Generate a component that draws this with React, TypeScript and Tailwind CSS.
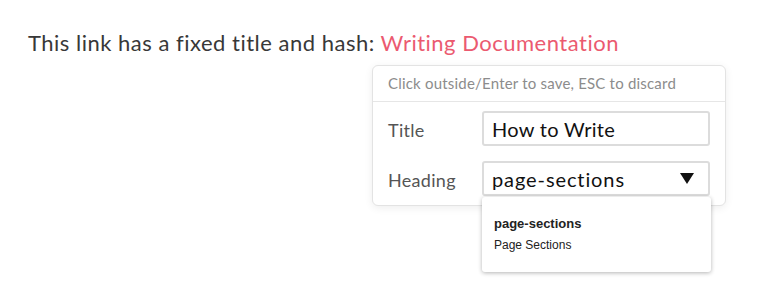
export default function App() {
  return (
    <div className="relative w-[760px] h-[303px] bg-white font-['Lato','Noto_Sans',sans-serif]">
      <p className="pt-[28px] pl-[28px] text-[22px] leading-[30px] tracking-[0.5px] text-[#383838]">
        This link has a fixed title and hash:{" "}
        <span className="text-[#eb5a70]">Writing Documentation</span>
      </p>

      <div className="absolute left-[372px] top-[65px] w-[354px] rounded-[6px] border border-[#e3e3e3] bg-white shadow-[0_2px_8px_rgba(0,0,0,0.07)]">
        <div className="h-[36px] border-b border-[#e6e6e6] pl-[15px] flex items-center text-[15px] tracking-[0.2px] text-[#8c8c8c]">
          Click outside/Enter to save, ESC to discard
        </div>
        <div className="pt-[9px] pb-[9px] pl-[15px] pr-[15px] flex flex-col gap-[15px]">
          <div className="flex items-center">
            <span className="w-[94px] text-[18px] tracking-[0.3px] text-[#555] pt-[4px]">Title</span>
            <div className="w-[228px] h-[35px] border-2 border-[#dcdcdc] rounded-[3px] flex items-center pl-[8px] text-[20px] tracking-[0.3px] text-[#111]">
              How to Write
            </div>
          </div>
          <div className="flex items-center">
            <span className="w-[94px] text-[18px] tracking-[0.3px] text-[#555] pt-[4px]">Heading</span>
            <div className="relative w-[228px] h-[35px] border-2 border-[#dcdcdc] rounded-[3px] flex items-center justify-between pl-[8px] pr-[14px] text-[20px] tracking-[0.9px] text-[#111]">
              <span>page-sections</span>
              <svg width="14" height="11" viewBox="0 0 14 11">
                <path d="M0 0 H14 L7 11 Z" fill="#111" />
              </svg>
            </div>
          </div>
        </div>
      </div>

      <div className="absolute left-[482px] top-[197px] w-[229px] h-[75px] rounded-[3px] bg-white shadow-[0_1px_4px_rgba(0,0,0,0.3)] pl-[12px] pt-[18px] font-['Liberation_Sans','Inter',sans-serif]">
        <div className="text-[13px] leading-[18px] font-semibold text-[#222]">page-sections</div>
        <div className="mt-[5px] text-[12px] leading-[14px] text-[#222]">Page Sections</div>
      </div>
    </div>
  );
}
